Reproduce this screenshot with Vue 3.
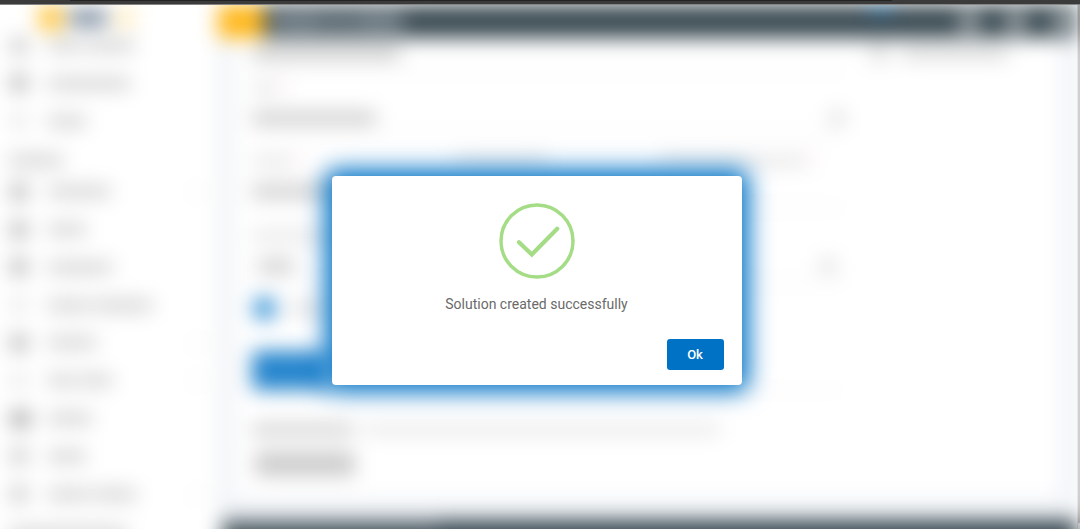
<script setup>
import { ref } from 'vue'

const open = ref(true)

const topLinks = [
  { icon: 3, words: [34, 48] },
  { icon: 4, words: [82] },
  { icon: 1, words: [38] },
]
const links = [
  { icon: 4, words: [62], more: true },
  { icon: 4, words: [38] },
  { icon: 4, words: [64] },
  { icon: 1, words: [42, 58] },
  { icon: 4, words: [48], more: true },
  { icon: 1, words: [28, 32], more: true },
  { icon: 5, words: [44] },
  { icon: 3, words: [38] },
  { icon: 3, words: [42, 42], more: true },
]
</script>

<template>
  <div class="screen">
    <div class="window-edge"><span></span><i></i></div>
    <div class="viewport">
      <div class="page" inert>
        <aside class="sidebar">
          <div class="brand"><i class="mark"></i><i class="name"></i><i class="suffix"></i></div>
          <nav class="group first">
            <a v-for="(l, n) in topLinks" :key="n" href="#" class="link">
              <i :class="['icon', 'tone' + l.icon]"></i>
              <span v-for="(w, k) in l.words" :key="k" class="word" :style="{ width: w + 'px' }"></span>
            </a>
          </nav>
          <div class="heading"><span class="word"></span></div>
          <nav class="group second">
            <a v-for="(l, n) in links" :key="n" href="#" class="link">
              <i :class="['icon', 'tone' + l.icon]"></i>
              <span v-for="(w, k) in l.words" :key="k" class="word" :style="{ width: w + 'px' }"></span>
              <i v-if="l.more" class="more"></i>
            </a>
          </nav>
          <div class="heading last"><span class="word"></span></div>
        </aside>
        <div class="main">
          <header class="topbar">
            <button class="menu" aria-label="Menu"></button>
            <div class="title"><span></span><span></span><span></span></div>
            <i class="tab"></i>
            <div class="tools"><i></i><i></i><i></i></div>
          </header>
          <section class="card">
            <form class="form" @submit.prevent>
              <div class="field one"><span class="text w150"></span></div>
              <div class="field two">
                <span class="label w25"><i></i></span>
                <div class="value"><span class="text w124"></span><i class="chevron"></i></div>
              </div>
              <div class="field three">
                <div class="labels">
                  <span class="label w40"><i></i></span><span class="label w90"></span><span class="label w145"><i></i></span>
                </div>
                <div class="value"><span class="text w90"></span></div>
              </div>
              <div class="field four">
                <span class="label w90"></span>
                <div class="value inset"><span class="text w36"></span><i class="chevron"></i></div>
              </div>
              <div class="check"><i></i><span></span></div>
              <div class="submit"><button class="primary" aria-label="Submit"></button></div>
              <p class="note"><span class="strong"></span><span class="light"></span></p>
              <button class="secondary" aria-label="Secondary action"></button>
            </form>
            <div class="option"><i></i><span></span></div>
          </section>
          <footer class="footer"><span></span></footer>
        </div>
      </div>
      <div class="scrollbar"><i></i></div>
    </div>

    <div v-if="open" class="overlay">
      <div class="dialog" role="alertdialog" aria-modal="true" aria-labelledby="message">
        <svg class="success" viewBox="0 0 76 76" fill="none" stroke="#a5dc86" aria-hidden="true">
          <circle cx="38" cy="38" r="36" stroke-width="3.5" />
          <path d="M20 39.2 32.8 51.5 58.2 25.8" stroke-width="4.2" stroke-linecap="round" />
        </svg>
        <p id="message">Solution created successfully</p>
        <button class="ok" @click="open = false">Ok</button>
      </div>
    </div>
  </div>
</template>

<style>
body { background: #fff; overflow: hidden; }
</style>

<style scoped>
* { box-sizing: border-box; }
i, span { display: block; flex: none; }
button { border: 0; padding: 0; }
.screen { position: relative; height: 100vh; display: flex; flex-direction: column; font-family: Roboto, "Liberation Sans", sans-serif; }
.window-edge { height: 5px; flex: none; display: flex; background: #3b3b3b; border-bottom: 1px solid #858585; }
.window-edge span { width: 70px; }
.window-edge i { width: 822px; height: 1px; background: #232323; }
.viewport { flex: 1; min-height: 0; display: flex; overflow: hidden; }
.page { flex: 1; min-width: 0; display: flex; overflow: hidden; margin-bottom: -24px; background: #eff2f6; filter: blur(10px); }

.sidebar { width: 218px; flex: none; background: #fff; }
.brand { height: 22px; display: flex; align-items: center; padding: 4px 0 0 39px; }
.mark { width: 24px; height: 24px; border-radius: 4px; background: #ffc640; }
.name { width: 38px; height: 16px; margin-left: 6px; background: #74869a; }
.suffix { width: 20px; height: 14px; margin-left: 8px; background: #ffe9b0; }
.group { display: grid; grid-auto-rows: 1fr; }
.first { height: 113px; }
.second { height: 340px; }
.link { display: flex; align-items: center; padding-left: 11px; text-decoration: none; }
.icon { width: 16px; height: 16px; margin-right: 21px; }
.tone1 { background: #e8e8e8; }
.tone3 { background: #c6c6c6; }
.tone4 { background: #b0b0b0; }
.tone5 { width: 19px; margin-right: 18px; background: #a0a0a0; }
.word { height: 11px; background: #cdcdcd; }
.word + .word { margin-left: 4px; }
.more { width: 6px; height: 6px; margin: 0 18px 0 auto; background: #e4e4e4; }
.heading { height: 33px; display: flex; align-items: center; padding: 8px 0 0 9px; }
.heading .word { width: 54px; }
.heading.last .word { width: 118px; }

.main { flex: 1; min-width: 0; display: flex; flex-direction: column; }
.topbar { height: 33px; flex: none; display: flex; align-items: center; background: #3a4a52; }
.menu { width: 46px; height: 33px; background: #ffb81c; }
.title { display: flex; gap: 5px; margin-left: 8px; }
.title span { height: 17px; width: 54px; background: #7f8b94; }
.title span:nth-child(2) { width: 17px; }
.title span:nth-child(3) { width: 50px; }
.tab { width: 22px; height: 6px; margin: 0 0 0 auto; align-self: flex-start; background: #0078d0; }
.tools { display: flex; gap: 29px; margin: 0 5px 0 68px; }
.tools i { width: 18px; height: 20px; background: #a0a9ad; }
.card { flex: 1; min-height: 0; display: flex; align-items: flex-start; margin: 0 16px 0 15px; background: #fff; }
.form { flex: 1; max-width: 592px; margin-left: 19px; }
.field { border-bottom: 1px solid #dedede; display: flex; flex-direction: column; }
.one { height: 33px; padding-top: 9px; }
.two { height: 64px; padding-top: 13px; }
.three { height: 73px; padding-top: 22px; }
.four { height: 75px; padding-top: 24px; }
.text { height: 12px; background: #c6c6c6; }
.label { height: 8px; background: #dcdcdc; display: flex; justify-content: flex-end; }
.label i { width: 5px; height: 6px; margin-right: -8px; background: #ffc8ca; }
.labels { display: flex; gap: 114px; }
.labels .w90 { margin-left: 50px; }
.value { display: flex; align-items: center; justify-content: space-between; height: 14px; margin-top: 19px; }
.inset { padding: 0 9px 0 6px; }
.chevron { width: 14px; height: 12px; background: #d4d4d4; }
.w25 { width: 25px; }
.w36 { width: 36px; }
.w40 { width: 40px; }
.w90 { width: 90px; }
.w124 { width: 124px; }
.w145 { width: 145px; }
.w150 { width: 148px; }
.check { display: flex; align-items: center; gap: 14px; margin-top: 15px; padding-left: 2px; }
.check i { width: 21px; height: 21px; border-radius: 2px; background: #3592d6; }
.check span { width: 42px; height: 9px; background: #d6d6d6; }
.submit { display: flex; margin-top: 32px; border-bottom: 1px solid #e8e8e8; }
.primary { width: 78px; height: 39px; border-radius: 3px; background: #2585cd; }
.note { display: flex; gap: 10px; align-items: center; margin: 33px 0 0; }
.strong { width: 102px; height: 11px; background: #cbcbcb; }
.light { flex: 1; max-width: 356px; height: 9px; background: #e2e2e2; }
.secondary { display: block; width: 100px; height: 24px; margin: 17px 0 0 3px; background: #cacaca; }
.option { display: flex; align-items: center; gap: 14px; margin: 6px 0 0 26px; }
.option i { width: 18px; height: 18px; background: #e0e0e0; }
.option span { width: 106px; height: 11px; background: #d6d6d6; }
.footer { height: 33px; flex: none; margin: 21px 0 0 5px; background: #37474f; }
.footer span { width: 210px; height: 12px; margin-left: 5px; background: #5c6a71; }
.scrollbar { width: 3px; flex: none; background: #f4f4f4; border-left: 1px solid #dcdcdc; padding-bottom: 6px; }
.scrollbar i { height: 100%; background: #b9b5b2; }

.overlay { position: absolute; inset: 4px 7px 0 0; padding-top: 28px; display: flex; align-items: center; justify-content: center; }
.dialog { width: 410px; max-width: 100%; display: flex; flex-direction: column; align-items: center; padding: 27px 18px 15px; border-radius: 4px; background: #fff; box-shadow: 0 0 24px 7px #0072c6; }
.success { width: 76px; height: 76px; }
#message { margin: 15px 0 25px; font-size: 14px; line-height: 20px; color: #6a6a6a; }
.ok { align-self: flex-end; width: 57px; height: 31px; border-radius: 3px; background: #0072c6; color: #fff; font: 500 13px/20px Roboto, "Liberation Sans", sans-serif; cursor: pointer; }
</style>
